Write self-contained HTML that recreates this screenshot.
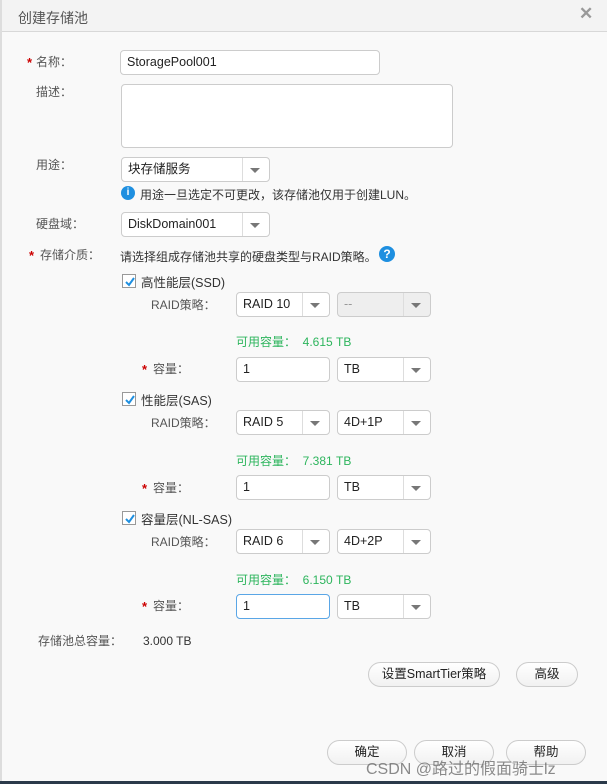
<!DOCTYPE html>
<html><head><meta charset="utf-8"><style>
*{margin:0;padding:0;box-sizing:border-box}
body{width:607px;height:784px;background:#f9f9f9;font-family:"Liberation Sans","Noto Sans CJK SC",sans-serif;font-size:12px;color:#333;position:relative;overflow:hidden}
.a{position:absolute;white-space:nowrap}
.lbl{color:#555;line-height:14px}
.star{color:#c00;font-size:13px;font-weight:bold}
.inp{position:absolute;background:#fff;border:1px solid #ccc;border-radius:4px;padding-left:6px;font-size:12.5px;color:#222}
.sel{position:absolute;background:#fff;border:1px solid #ccc;border-radius:4px;padding-left:6px;font-size:12.5px;color:#222}
.sel:after{content:"";position:absolute;right:9px;top:50%;margin-top:-2px;border-left:5px solid transparent;border-right:5px solid transparent;border-top:5px solid #777}
.sel:before{content:"";position:absolute;right:26px;top:0;bottom:0;border-left:1px solid #ddd}
.cb{position:absolute;width:14px;height:14px;border:1px solid #999;background:#fff}
.cb svg{position:absolute;left:1px;top:1px}
.green{color:#2db55d}
.btn{position:absolute;height:25px;border:1px solid #ccc;border-radius:13px;background:linear-gradient(#fff,#f1f1f1);text-align:center;line-height:23px;font-size:12.5px;color:#222}
</style></head><body>
<div class="a" style="left:0;top:0;width:607px;height:32px;background:#f3f3f3;border-bottom:1px solid #d8d8d8"></div>
<div class="a" style="left:0;top:0;width:2px;height:784px;background:#ddd"></div>
<div class="a" style="left:18px;top:8px;font-size:14px;color:#555">创建存储池</div>
<div class="a" style="left:579px;top:4px;font-size:17px;color:#999;font-weight:bold">✕</div>

<div class="a star" style="left:27px;top:55px">*</div>
<div class="a lbl" style="left:36px;top:55px">名称：</div>
<div class="inp" style="left:120px;top:50px;width:260px;height:25px;line-height:23px">StoragePool001</div>

<div class="a lbl" style="left:36px;top:85px">描述：</div>
<div class="inp" style="left:121px;top:84px;width:332px;height:64px"></div>

<div class="a lbl" style="left:36px;top:158px">用途：</div>
<div class="sel" style="left:121px;top:157px;width:149px;height:25px;line-height:23px">块存储服务</div>
<div class="a" style="left:121px;top:186px;width:14px;height:14px;border-radius:50%;background:#1e8fe0;color:#fff;font-size:10px;font-weight:bold;text-align:center;line-height:14px">i</div>
<div class="a" style="left:140px;top:186px;color:#333">用途一旦选定不可更改，该存储池仅用于创建LUN。</div>

<div class="a lbl" style="left:36px;top:217px">硬盘域：</div>
<div class="sel" style="left:121px;top:212px;width:149px;height:25px;line-height:23px">DiskDomain001</div>

<div class="a star" style="left:29px;top:248px">*</div>
<div class="a lbl" style="left:40px;top:248px">存储介质：</div>
<div class="a" style="left:120px;top:248px">请选择组成存储池共享的硬盘类型与RAID策略。</div>
<div class="a" style="left:379px;top:246px;width:16px;height:16px;border-radius:50%;background:#1e8fe0;color:#fff;font-size:12px;font-weight:bold;text-align:center;line-height:16px">?</div>

<div class="cb" style="left:122px;top:274px"><svg width="12" height="12"><path d="M2 6 L5 9 L10 2" stroke="#1e8fe0" stroke-width="2" fill="none"/></svg></div>
<div class="a" style="left:141px;top:272px;font-size:12.5px">高性能层(SSD)</div>
<div class="a lbl" style="left:151px;top:298px">RAID策略：</div>
<div class="sel" style="left:236px;top:292px;width:94px;height:25px;line-height:23px">RAID 10</div>
<div class="sel" style="left:337px;top:292px;width:94px;height:25px;line-height:23px;background:#eee;color:#999">--</div>
<div class="a green" style="left:236px;top:333px">可用容量：&nbsp;&nbsp;4.615 TB</div>
<div class="a star" style="left:142px;top:362px">*</div>
<div class="a lbl" style="left:153px;top:362px">容量：</div>
<div class="inp" style="left:236px;top:357px;width:94px;height:25px;line-height:23px">1</div>
<div class="sel" style="left:337px;top:357px;width:94px;height:25px;line-height:23px">TB</div>

<div class="cb" style="left:122px;top:392px"><svg width="12" height="12"><path d="M2 6 L5 9 L10 2" stroke="#1e8fe0" stroke-width="2" fill="none"/></svg></div>
<div class="a" style="left:141px;top:390px;font-size:12.5px">性能层(SAS)</div>
<div class="a lbl" style="left:151px;top:416px">RAID策略：</div>
<div class="sel" style="left:236px;top:410px;width:94px;height:25px;line-height:23px">RAID 5</div>
<div class="sel" style="left:337px;top:410px;width:94px;height:25px;line-height:23px">4D+1P</div>
<div class="a green" style="left:236px;top:452px">可用容量：&nbsp;&nbsp;7.381 TB</div>
<div class="a star" style="left:142px;top:481px">*</div>
<div class="a lbl" style="left:153px;top:481px">容量：</div>
<div class="inp" style="left:236px;top:475px;width:94px;height:25px;line-height:23px">1</div>
<div class="sel" style="left:337px;top:475px;width:94px;height:25px;line-height:23px">TB</div>

<div class="cb" style="left:122px;top:511px"><svg width="12" height="12"><path d="M2 6 L5 9 L10 2" stroke="#1e8fe0" stroke-width="2" fill="none"/></svg></div>
<div class="a" style="left:141px;top:509px;font-size:12.5px">容量层(NL-SAS)</div>
<div class="a lbl" style="left:151px;top:535px">RAID策略：</div>
<div class="sel" style="left:236px;top:529px;width:94px;height:25px;line-height:23px">RAID 6</div>
<div class="sel" style="left:337px;top:529px;width:94px;height:25px;line-height:23px">4D+2P</div>
<div class="a green" style="left:236px;top:571px">可用容量：&nbsp;&nbsp;6.150 TB</div>
<div class="a star" style="left:142px;top:599px">*</div>
<div class="a lbl" style="left:153px;top:599px">容量：</div>
<div class="inp" style="left:236px;top:594px;width:94px;height:25px;line-height:23px;border-color:#5aa6e6">1</div>
<div class="sel" style="left:337px;top:594px;width:94px;height:25px;line-height:23px">TB</div>

<div class="a lbl" style="left:38px;top:634px">存储池总容量：</div>
<div class="a" style="left:143px;top:634px">3.000 TB</div>

<div class="btn" style="left:368px;top:662px;width:132px">设置SmartTier策略</div>
<div class="btn" style="left:516px;top:662px;width:62px">高级</div>

<div class="btn" style="left:327px;top:740px;width:80px">确定</div>
<div class="btn" style="left:414px;top:740px;width:80px">取消</div>
<div class="btn" style="left:506px;top:740px;width:80px">帮助</div>
<div class="a" style="left:366px;top:755px;font-size:16px;color:rgba(90,90,90,0.7)">CSDN @路过的假面骑士lz</div>
<div class="a" style="left:0;top:781px;width:607px;height:3px;background:#2b3a4a"></div>
</body></html>
